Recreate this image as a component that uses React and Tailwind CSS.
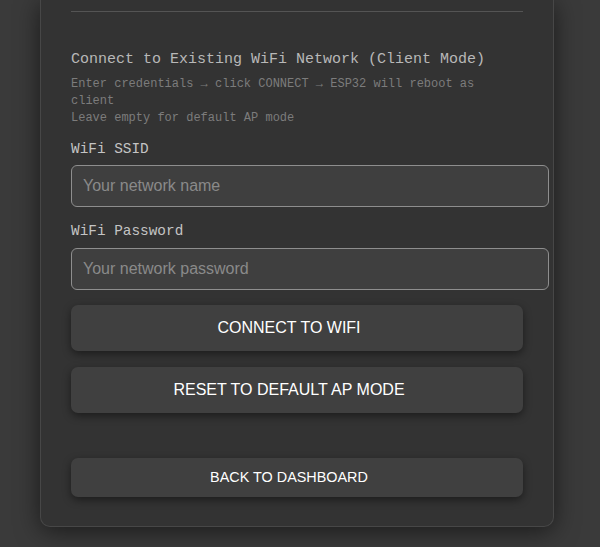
export default function App() {
  return (
    <div className="min-h-[547px] bg-[#3a3a3a] flex overflow-hidden">
      <div className="w-[514px] ml-[40px] bg-[#333333] border-x border-b border-[#474747] rounded-b-[10px] shadow-[0_4px_24px_rgba(0,0,0,0.55)] px-[30px] pt-[11px] pb-[29px] h-fit">
        <div className="h-px bg-[#545454]" />

        <h3 className="mt-[38px] text-[15px] leading-[20px] text-[#b8b8b8] font-['Liberation_Mono','Courier_New',monospace]">
          Connect to Existing WiFi Network (Client Mode)
        </h3>
        <p className="mt-[6px] text-[12px] leading-[17px] text-[#7c7c7c] font-['Liberation_Mono','Courier_New',monospace]">
          Enter credentials → click CONNECT → ESP32 will reboot as client
          <br />
          Leave empty for default AP mode
        </p>

        <label className="block mt-[12px] text-[14.4px] leading-[20px] text-[#c4c4c4] font-['Liberation_Mono','Courier_New',monospace]">
          WiFi SSID
        </label>
        <input
          type="text"
          placeholder="Your network name"
          className="block mt-[6px] w-[478px] h-[42px] px-[11px] bg-[#3f3f3f] border border-[#8e8e8e] rounded-[6px] text-[16px] text-white placeholder:text-[#8a8a8a] font-['Liberation_Sans',Arial,sans-serif] outline-none"
        />

        <label className="block mt-[14px] text-[14.4px] leading-[20px] text-[#c4c4c4] font-['Liberation_Mono','Courier_New',monospace]">
          WiFi Password
        </label>
        <input
          type="password"
          placeholder="Your network password"
          className="block mt-[7px] w-[478px] h-[42px] px-[11px] bg-[#3f3f3f] border border-[#8e8e8e] rounded-[6px] text-[16px] text-white placeholder:text-[#8a8a8a] font-['Liberation_Sans',Arial,sans-serif] outline-none"
        />

        <button className="block w-full mt-[15px] h-[46px] pr-[16px] bg-[#404040] rounded-[7px] shadow-[0_3px_8px_rgba(0,0,0,0.45)] text-[16px] text-white font-['Liberation_Sans',Arial,sans-serif]">
          CONNECT TO WIFI
        </button>
        <button className="block w-full mt-[16px] h-[46px] pr-[16px] bg-[#404040] rounded-[7px] shadow-[0_3px_8px_rgba(0,0,0,0.45)] text-[16px] text-white font-['Liberation_Sans',Arial,sans-serif]">
          RESET TO DEFAULT AP MODE
        </button>

        <button className="block w-full mt-[45px] h-[39px] pr-[16px] bg-[#404040] rounded-[7px] shadow-[0_3px_8px_rgba(0,0,0,0.45)] text-[14.4px] text-white font-['Liberation_Sans',Arial,sans-serif]">
          BACK TO DASHBOARD
        </button>
      </div>
    </div>
  );
}
